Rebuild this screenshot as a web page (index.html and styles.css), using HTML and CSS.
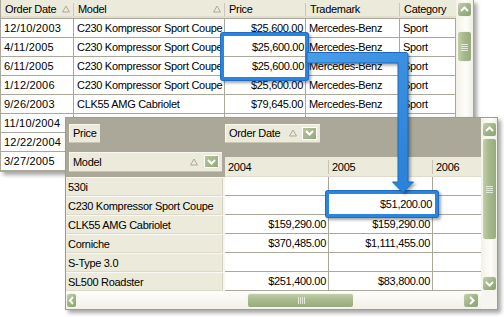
FILE: index.html
```html
<!DOCTYPE html>
<html lang="en">
<head>
  <meta charset="UTF-8" />
  <title>Grid to Pivot</title>
  <link rel="stylesheet" href="styles.css">
</head>
<body>
  <div class="grid-back">
    <div class="bg-table">
      <div class="bg-row bg-head">
        <div class="bg-hcell">Order Date <svg class="sort" width="8" height="8"><polygon points="4,1 7.5,7 0.5,7" fill="none" stroke="#aca899"/></svg></div>
        <div class="bg-hcell">Model <svg class="sort" width="8" height="8"><polygon points="4,1 7.5,7 0.5,7" fill="none" stroke="#aca899"/></svg></div>
        <div class="bg-hcell">Price</div>
        <div class="bg-hcell">Trademark</div>
        <div class="bg-hcell last">Category</div>
      </div>
      <div class="bg-row"><div class="date">12/10/2003</div><div>C230 Kompressor Sport Coupe</div><div class="num">$25,600.00</div><div>Mercedes-Benz</div><div>Sport</div></div>
      <div class="bg-row"><div class="date">4/11/2005</div><div>C230 Kompressor Sport Coupe</div><div class="num">$25,600.00</div><div>Mercedes-Benz</div><div>Sport</div></div>
      <div class="bg-row"><div class="date">6/11/2005</div><div>C230 Kompressor Sport Coupe</div><div class="num">$25,600.00</div><div>Mercedes-Benz</div><div>Sport</div></div>
      <div class="bg-row"><div class="date">1/12/2006</div><div>C230 Kompressor Sport Coupe</div><div class="num">$25,600.00</div><div>Mercedes-Benz</div><div>Sport</div></div>
      <div class="bg-row"><div class="date">9/26/2003</div><div>CLK55 AMG Cabriolet</div><div class="num">$79,645.00</div><div>Mercedes-Benz</div><div>Sport</div></div>
      <div class="bg-row"><div class="date">11/10/2004</div><div>CLK55 AMG Cabriolet</div><div class="num">$79,645.00</div><div>Mercedes-Benz</div><div>Sport</div></div>
      <div class="bg-row"><div class="date">12/22/2004</div><div>Corniche</div><div class="num">$370,485.00</div><div>Rolls-Royce</div><div>Saloon</div></div>
      <div class="bg-row"><div class="date">3/27/2005</div><div>Corniche</div><div class="num">$370,485.00</div><div>Rolls-Royce</div><div>Saloon</div></div>
    </div>
    <div class="vscroll back-scroll">
      <div class="sb-btn"><svg width="13" height="13"><polyline points="3,8 6.5,4.5 10,8" fill="none" stroke="#fff" stroke-width="2"/></svg></div>
      <div class="v-thumb back-thumb"><svg width="7" height="8"><path d="M0 1.5h7M0 3.5h7M0 5.5h7M0 7.5h7" stroke="#e4ead9" stroke-width="1"/></svg></div>
    </div>
  </div>

  <div class="pivot">
    <div class="pv-main">
      <div class="pv-filters">
        <div class="field field-price">Price</div>
        <div class="field field-date">
          Order Date
          <svg class="sort" width="8" height="8"><polygon points="4,1 7.5,7 0.5,7" fill="none" stroke="#aca899"/></svg>
          <span class="filter-btn"><svg width="11" height="8"><polyline points="2,2 5.5,5.5 9,2" fill="none" stroke="#fff" stroke-width="2"/></svg></span>
        </div>
      </div>
      <div class="pv-head">
        <div class="field field-model">
          Model
          <svg class="sort" width="8" height="8"><polygon points="4,1 7.5,7 0.5,7" fill="none" stroke="#aca899"/></svg>
          <span class="filter-btn"><svg width="11" height="8"><polyline points="2,2 5.5,5.5 9,2" fill="none" stroke="#fff" stroke-width="2"/></svg></span>
        </div>
        <div class="pv-col">2004</div>
        <div class="pv-col">2005</div>
        <div class="pv-col last">2006</div>
      </div>
      <div class="pv-row"><div class="pv-rh">530i</div><div class="pv-cell"></div><div class="pv-cell"></div><div class="pv-cell last"></div></div>
      <div class="pv-row"><div class="pv-rh">C230 Kompressor Sport Coupe</div><div class="pv-cell"></div><div class="pv-cell">$51,200.00</div><div class="pv-cell last"></div></div>
      <div class="pv-row"><div class="pv-rh">CLK55 AMG Cabriolet</div><div class="pv-cell">$159,290.00</div><div class="pv-cell">$159,290.00</div><div class="pv-cell last"></div></div>
      <div class="pv-row"><div class="pv-rh">Corniche</div><div class="pv-cell">$370,485.00</div><div class="pv-cell">$1,111,455.00</div><div class="pv-cell last"></div></div>
      <div class="pv-row"><div class="pv-rh">S-Type 3.0</div><div class="pv-cell"></div><div class="pv-cell"></div><div class="pv-cell last"></div></div>
      <div class="pv-row"><div class="pv-rh">SL500 Roadster</div><div class="pv-cell">$251,400.00</div><div class="pv-cell">$83,800.00</div><div class="pv-cell last"></div></div>
    </div>
    <div class="vscroll pv-vscroll">
      <div class="sb-btn"><svg width="13" height="13"><polyline points="3,8 6.5,4.5 10,8" fill="none" stroke="#fff" stroke-width="2"/></svg></div>
      <div class="v-thumb pv-thumb"><svg width="7" height="8"><path d="M0 1.5h7M0 3.5h7M0 5.5h7M0 7.5h7" stroke="#e4ead9" stroke-width="1"/></svg></div>
      <div class="sb-btn sb-bottom"><svg width="13" height="13"><polyline points="3,5 6.5,8.5 10,5" fill="none" stroke="#fff" stroke-width="2"/></svg></div>
    </div>
    <div class="pv-hscroll">
      <div class="sb-btn sb-left"><svg width="10" height="13"><polyline points="6,3 3,6.5 6,10" fill="none" stroke="#fff" stroke-width="2"/></svg></div>
      <div class="h-thumb"><svg width="8" height="7"><path d="M1.5 0v7M3.5 0v7M5.5 0v7M7.5 0v7" stroke="#e4ead9" stroke-width="1"/></svg></div>
      <div class="sb-btn sb-right"><svg width="13" height="13"><polyline points="5,3 8.5,6.5 5,10" fill="none" stroke="#fff" stroke-width="2"/></svg></div>
    </div>
    <div class="pv-corner"></div>
  </div>

  <div class="hl hl-back">
    <div class="hl-cell sep">$25,600.00</div>
    <div class="hl-cell">$25,600.00</div>
  </div>
  <div class="hl hl-front">
    <div class="hl-cell">$51,200.00</div>
  </div>

  <svg class="arrow" width="504" height="317">
    <defs>
      <linearGradient id="blue" x1="0" y1="0" x2="1" y2="1">
        <stop offset="0" stop-color="#4a9de8"/>
        <stop offset="1" stop-color="#2880d8"/>
      </linearGradient>
    </defs>
    <path d="M307 52.5H406a2 2 0 0 1 2 2V182h5.5L403 192.5 392.5 182H398V63H307Z" fill="url(#blue)" stroke="#1c6bc0" stroke-width="1"/>
  </svg>
</body>
</html>
```

FILE: styles.css
```css
body {
  margin: 0;
  width: 504px;
  height: 317px;
  overflow: hidden;
  position: relative;
  background: #fff;
  font-family: "Liberation Sans", Arial, sans-serif;
  font-size: 11px;
  letter-spacing: -0.3px;
  color: #000;
}

/* back grid */
.grid-back {
  position: absolute;
  left: 0;
  top: 0;
  display: flex;
  width: 472px;
  height: 171px;
  border-left: 1px solid #aca899;
  border-right: 1px solid #aca899;
  border-bottom: 1px solid #aca899;
  background: #fff;
  box-shadow: 3px 3px 4px rgba(0,0,0,0.35);
}

.bg-table {
  width: 455px;
}

.bg-row {
  display: grid;
  grid-template-columns: 73px 151px 81px 94px 56px;
  height: 19px;
}

.bg-row > div {
  box-sizing: border-box;
  border-right: 1px solid #aca899;
  border-bottom: 1px solid #aca899;
  padding: 0 2px 0 3px;
  line-height: 18px;
  white-space: nowrap;
  overflow: hidden;
}

.bg-row > .date {
  letter-spacing: 0.2px;
}

.bg-row > .num {
  text-align: right;
  padding-right: 2px;
}

.bg-head > .bg-hcell {
  display: flex;
  align-items: center;
  justify-content: space-between;
  padding: 0 4px 0 4px;
  border-right: none;
  background: linear-gradient(#cbc7b8, #cbc7b8) no-repeat right 0 top 3px / 1px 13px, #ebeadb;
  box-shadow: inset 0 -2px #e2decd;
}

.bg-hcell.last {
  background: #ebeadb;
}

.vscroll {
  display: flex;
  flex-direction: column;
  align-items: center;
  background: linear-gradient(90deg, #f3f1e7, #fdfdfa 60%, #f0eee4);
}

.back-scroll {
  width: 17px;
  padding-top: 2px;
  box-sizing: border-box;
}

.sb-btn {
  width: 15px;
  height: 15px;
  box-sizing: border-box;
  border: 1px solid #f4f6ee;
  border-radius: 3px;
  background: linear-gradient(135deg, #c3d0ad, #9eb285 55%, #8da274);
  display: flex;
  align-items: center;
  justify-content: center;
  flex: none;
}

.v-thumb {
  width: 15px;
  box-sizing: border-box;
  border: 1px solid #f4f6ee;
  border-radius: 3px;
  background: linear-gradient(90deg, #c2cfab, #a9bb8f 40%, #98ab7e);
  display: flex;
  align-items: center;
  justify-content: center;
  flex: none;
}

.back-thumb {
  height: 31px;
  margin-top: 14px;
}

/* pivot grid */
.pivot {
  position: absolute;
  left: 65px;
  top: 117px;
  display: grid;
  grid-template-columns: 415px 16px;
  grid-template-rows: 173px 18px;
  border: 1px solid #93a583;
  background: #fff;
  box-shadow: 3px 3px 4px rgba(0,0,0,0.35);
}

.pv-main {
  background: #aca899;
  overflow: hidden;
  display: flex;
  flex-direction: column;
}

.pv-filters {
  height: 34px;
  flex: none;
  box-sizing: border-box;
  padding-top: 6px;
  display: grid;
  grid-template-columns: 159px 1fr;
  align-items: start;
}

.field {
  display: flex;
  align-items: center;
  height: 19px;
  box-sizing: border-box;
  padding: 0 3px 0 4px;
  margin-left: 3px;
  background: #ebeadb;
  border-bottom: 1px solid #c9c5b4;
  box-shadow: inset 1px 1px #f7f6ef;
  white-space: nowrap;
}

.field-price {
  justify-self: start;
}

.field-date {
  justify-self: start;
  margin-left: 0;
  width: 95px;
}

.field-model {
  width: 153px;
  height: 20px;
}

.field .sort {
  margin-left: auto;
}

.filter-btn {
  width: 15px;
  height: 13px;
  margin-left: 5px;
  box-sizing: border-box;
  border: 1px solid #fff;
  background: linear-gradient(135deg, #b6c69c, #93a87a);
  display: flex;
  align-items: center;
  justify-content: center;
}

.field-model .filter-btn {
  margin-left: 6px;
}

.pv-head {
  height: 25px;
  flex: none;
  display: grid;
  grid-template-columns: 159px 104px 104px 48px;
  align-items: start;
}

.pv-col {
  margin-top: 5px;
  height: 20px;
  box-sizing: border-box;
  padding-left: 3px;
  line-height: 20px;
  border-bottom: 1px solid #dedbcc;
  background: linear-gradient(#c7c4b3, #c7c4b3) no-repeat right 0 top 3px / 1px 14px, #ebeadb;
}

.pv-col.last {
  background: #ebeadb;
}

.pv-row {
  height: 19px;
  flex: none;
  display: grid;
  grid-template-columns: 159px 104px 104px 48px;
  background: #fff;
}

.pv-rh {
  box-sizing: border-box;
  padding-left: 2px;
  line-height: 18px;
  background: #ebeadb;
  border-top: 1px solid #f9f8f3;
  border-right: 2px solid #f6f5ef;
  box-shadow: inset 0 -1px #dcd9ca, inset -1px 0 #d6d2c2;
  white-space: nowrap;
  overflow: hidden;
}

.pv-cell {
  box-sizing: border-box;
  border-right: 1px solid #aca899;
  border-bottom: 1px solid #aca899;
  padding-right: 2px;
  text-align: right;
  line-height: 18px;
  white-space: nowrap;
}

.pv-cell.last {
  border-right: none;
}

.pv-vscroll {
  padding-top: 4px;
  box-sizing: border-box;
}

.pv-thumb {
  height: 102px;
  margin-top: 1px;
}

.sb-bottom {
  margin-top: auto;
}

.pv-hscroll {
  display: flex;
  align-items: center;
  background: linear-gradient(#fefefc, #f1efe6);
}

.sb-left {
  width: 11px;
}

.h-thumb {
  width: 107px;
  height: 15px;
  margin-left: 170px;
  box-sizing: border-box;
  border: 1px solid #f4f6ee;
  border-radius: 3px;
  background: linear-gradient(#c2cfab, #a9bb8f 40%, #98ab7e);
  display: flex;
  align-items: center;
  justify-content: center;
}

.sb-right {
  margin-left: auto;
  margin-right: 2px;
  width: 16px;
}

.pv-corner {
  background: #f6f5ef;
}

/* callouts */
.hl {
  position: absolute;
  box-sizing: border-box;
  border: 3px solid #2a86dc;
  border-radius: 2px;
  background: #fff;
  box-shadow: 0 0 0 1px #1d6ec4, 2px 2px 3px 1px rgba(0,0,0,0.35);
}

.hl-back {
  left: 221px;
  top: 33px;
  width: 87px;
  height: 47px;
  padding-top: 2px;
}

.hl-front {
  left: 326px;
  top: 191px;
  width: 112px;
  height: 26px;
}

.hl-cell {
  height: 19px;
  line-height: 19px;
  text-align: right;
  padding-right: 1px;
  box-sizing: border-box;
}

.hl-back .hl-cell.sep {
  border-bottom: 1px solid #aca899;
}

.hl-front .hl-cell {
  line-height: 20px;
  padding-right: 3px;
}

.arrow {
  position: absolute;
  left: 0;
  top: 0;
  pointer-events: none;
  filter: drop-shadow(2px 2px 1.5px rgba(0,0,0,0.35));
}
```
